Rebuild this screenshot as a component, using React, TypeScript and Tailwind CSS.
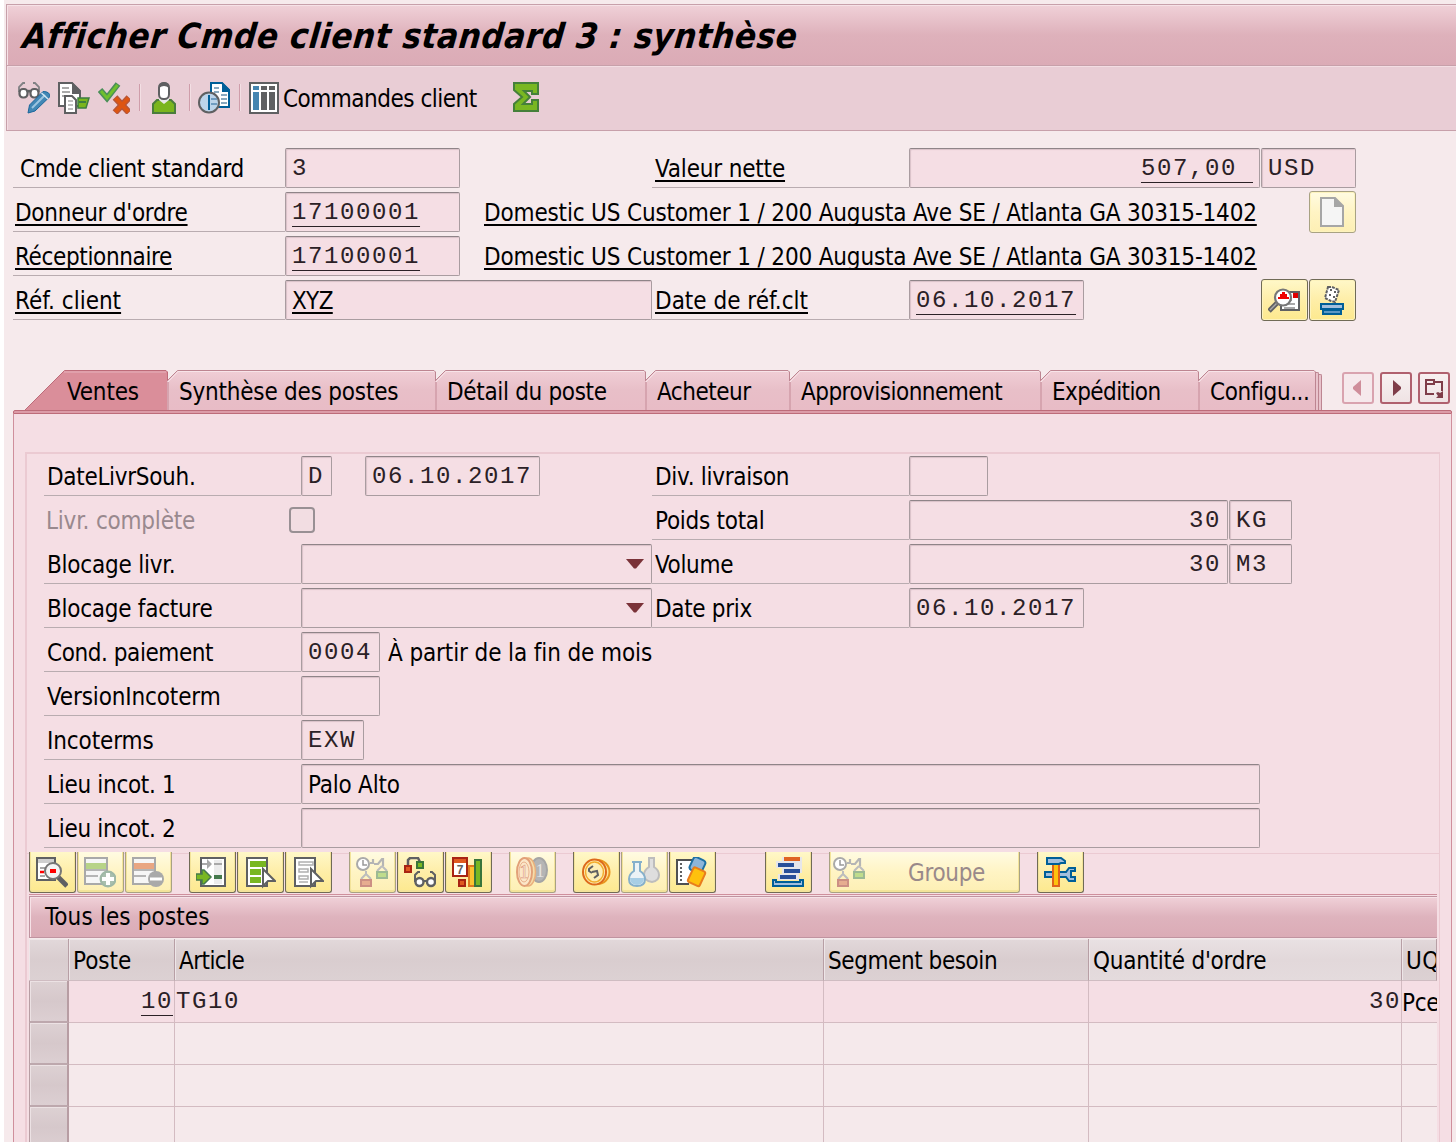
import React, { useLayoutEffect, useRef, useState } from "react";

const SANS = "font-['DejaVu_Sans_Condensed','DejaVu_Sans',sans-serif] [font-stretch:condensed]";
const MONO = "font-['Liberation_Mono',monospace]";

/* Text whose tracking is adjusted so that it fills a given width. */
function Fit({ w, children, className = "top-px" }: { w: number; children: string; className?: string }) {
  const ref = useRef<HTMLSpanElement>(null);
  const [ls, setLs] = useState(0);
  useLayoutEffect(() => {
    const el = ref.current;
    if (!el) return;
    el.style.letterSpacing = "0px";
    const natural = el.offsetWidth;
    setLs((w - natural) / children.length);
    el.style.letterSpacing = `${(w - natural) / children.length}px`;
  }, [w, children]);
  return (
    <span ref={ref} className={`relative inline-block shrink-0 whitespace-pre ${className}`} style={{ letterSpacing: `${ls}px` }}>
      {children}
    </span>
  );
}

const UL = "top-px underline decoration-2 underline-offset-[3px] [text-decoration-skip-ink:none]";
const MUL = "underline decoration-1 underline-offset-[6.500px] [text-decoration-skip-ink:none]";

function Mono({ children, link = false, className = "top-px" }: { children: string; link?: boolean; className?: string }) {
  return (
    <span className={`${MONO} relative whitespace-pre text-[24px] tracking-[1.6px] text-[#2b2126] ${link ? MUL : ""} ${className}`}>{children}</span>
  );
}

function Field({ className, children, right = false }: { className: string; children?: React.ReactNode; right?: boolean }) {
  return (
    <div
      className={`flex h-10 shrink-0 items-center rounded-[2px] border border-[#a99ca0] border-t-[#8f8488] bg-[#f5dee4] px-[6px] shadow-[inset_1px_1px_1px_#d9c0c7] ${right ? "justify-end" : ""} ${className}`}
    >
      {children}
    </div>
  );
}

function Label({ className, w, text, link = false }: { className: string; w: number; text: string; link?: boolean }) {
  return (
    <div className={`flex h-10 shrink-0 items-center border-b border-[#b9acb0] ${className}`}>
      <Fit w={w} className={link ? UL : "top-px"}>{text}</Fit>
    </div>
  );
}

function Svg({ children, w = 32, h = 32, className = "" }: { children: React.ReactNode; w?: number; h?: number; className?: string }) {
  return (
    <svg width={w} height={h} viewBox={`0 0 ${w} ${h}`} fill="none" className={`shrink-0 ${className}`}>
      {children}
    </svg>
  );
}

const G = "#5f6062";

const IconEdit = () => (
  <Svg>
    <path d="M1 10V5L5 1h2M21 10V5L17 1h-2" stroke="#808184" strokeWidth="1.800" />
    <path d="M9 10q2-2 4 0" stroke={G} strokeWidth="2.500" />
    <rect x="1.500" y="7" width="8" height="8.500" rx="3.500" fill="#fff" stroke={G} strokeWidth="2.200" />
    <rect x="12.500" y="7" width="8" height="8.500" rx="3.500" fill="#fff" stroke={G} strokeWidth="2.200" />
    <path d="M10 31l1.500-8L25 9.500q7 0 7 5L17 29z" fill="#4287b5" stroke="#1b679b" />
    <path d="M14 26L27 13" stroke="#9cc4e0" strokeWidth="2" />
    <path d="M23.500 11l6.500 6" stroke="#d5e6f2" strokeWidth="1.500" />
  </Svg>
);
const IconDocs = () => (
  <Svg>
    <path d="M1 1h13l8 8v15H1z" fill="#fff" stroke={G} strokeWidth="2" />
    <path d="M14 0l9 9v3h-9z" fill={G} />
    <path d="M4 6h7M4 10h8M4 14h4" stroke="#a9a9a9" strokeWidth="2" />
    <path d="M20 16h11l-3 10h-8z" fill="#7ab51d" stroke="#3d7d3f" strokeWidth="1.500" />
    <path d="M21 20h7" stroke="#3d7d3f" strokeWidth="2" />
    <path d="M7 14h7l4 4v13H7z" fill="#fff" stroke={G} strokeWidth="2" />
    <path d="M10 19h5M10 23h5M10 27h5" stroke="#a9a9a9" strokeWidth="1.500" />
  </Svg>
);
const IconCheckCross = () => (
  <Svg>
    <path d="M2 8l7 8L20 2" stroke="#4b8f58" strokeWidth="6" />
    <path d="M3 9l6 7L19.500 3" stroke="#6fc02c" strokeWidth="2.800" />
    <path d="M17 15.500l14 15M31 15.500L17 30.500" stroke="#b5563a" strokeWidth="6.500" />
    <path d="M17.500 16l13 14M30.500 16L17.500 30" stroke="#dd5512" strokeWidth="4" />
  </Svg>
);
const IconPerson = () => (
  <Svg w={26}>
    <path d="M2 31v-9l4-4h14l4 4v9z" fill="#7ab51d" stroke="#4a7d3c" strokeWidth="2" />
    <path d="M8 15h10v3l-5 4-5-4z" fill="#e8e8e8" />
    <rect x="8" y="1" width="10" height="16" rx="4.500" fill="#fff" stroke={G} strokeWidth="2" />
    <path d="M8 6q0-6 5-6t5 6q-5-4-10 0z" fill={G} />
  </Svg>
);
const IconDocTime = () => (
  <Svg>
    <path d="M13 1h11l7 7v17H13z" fill="#fff" stroke="#005f98" strokeWidth="2" />
    <path d="M24 0l8 8v2h-8z" fill="#005f98" />
    <path d="M16 6h5M16 10h5M23 13h6M23 17h6M23 21h6" stroke="#8aa9bf" strokeWidth="2" />
    <circle cx="11" cy="20.500" r="10" fill="#bcd4ea" stroke={G} strokeWidth="2" />
    <path d="M11 13v15" stroke="#005f98" strokeWidth="2" />
    <path d="M13 17h6M13 22h6" stroke="#6f9cc0" strokeWidth="2" />
  </Svg>
);
const IconColumns = () => (
  <Svg w={30}>
    <rect x="1" y="1" width="28" height="30" fill="#fff" stroke={G} strokeWidth="2" />
    <path d="M4 4h6v4H4zM4 10h6v18H4z" fill="#4585b0" />
    <path d="M12 4h6v4h-6zM12 10h6v18h-6zM20 4h6v4h-6zM20 10h6v18h-6z" fill={G} />
  </Svg>
);
const IconSigma = () => (
  <Svg w={26} h={30}>
    <path d="M1 1h24v11h-6V9h-8l6 6-7 7h9v-4h6v11H1v-7l8-7-8-7z" fill="#79b722" stroke="#45803a" strokeWidth="2" />
  </Svg>
);

const Glass = ({ cx, cy }: { cx: number; cy: number }) => (
  <circle cx={cx} cy={cy} r="4" fill="#fff" stroke={G} strokeWidth="2.400" />
);

const IconNewDoc = () => (
  <Svg>
    <path d="M5 1h14l8 8v20H5z" fill="#f5f5f5" stroke="#a6a6a6" strokeWidth="2" />
    <path d="M18 0l10 10H18z" fill="#a6a6a6" />
  </Svg>
);
const IconDocSearch = () => (
  <Svg>
    <path d="M13 7h18v18H13z" fill="#fff" stroke={G} strokeWidth="2" />
    <path d="M16 15h8M16 19h11M16 23h11" stroke="#a9a9a9" strokeWidth="2" />
    <path d="M25 8h5v5h-5z" fill="#e00000" />
    <path d="M10 17L1 26" stroke={G} strokeWidth="5" />
    <path d="M9 18l-7 7" stroke="#aaa" strokeWidth="1.500" />
    <circle cx="15" cy="12.500" r="8" fill="#fff" stroke="#777" strokeWidth="2.200" />
    <path d="M10 14v-2h2V9h2V7h3v2h2v3h2v2z" fill="#f00000" />
  </Svg>
);
const IconPrint = () => (
  <Svg>
    <path d="M12 2h4l7 3-4 12-4-1-6-3z" fill="#fff" stroke={G} strokeWidth="2" strokeDasharray="3 1" />
    <path d="M14 5h2m2 2h2m-7 3h2m2 2h2" stroke={G} strokeWidth="2" />
    <path d="M5 19h22v5H5z" fill="#a3bfdd" stroke="#005f98" strokeWidth="2" />
    <path d="M7 25h18v4H7z" fill="#5c97c4" stroke="#005f98" strokeWidth="2" />
  </Svg>
);
const IconDetail = () => (
  <Svg>
    <path d="M1 1h18v22H1z" fill="#fff" stroke={G} strokeWidth="2" />
    <path d="M2 2h16v4H2z" fill="#cfcfcf" />
    <path d="M4 11h6M4 19h5" stroke="#a9a9a9" strokeWidth="2" />
    <path d="M4 15h4" stroke="#f00" strokeWidth="2.500" />
    <path d="M22 20l9 9" stroke={G} strokeWidth="5" />
    <circle cx="17" cy="14" r="8" fill="#f4f4f4" stroke="#777" strokeWidth="2" />
    <path d="M14 12h6v4h-6z" fill="#f00" />
  </Svg>
);
const RowIcon = ({ band, children }: { band: string; children: React.ReactNode }) => (
  <Svg>
    <path d="M1 1h22v26H1z" fill="#f6f6f6" stroke="#a9a9a9" strokeWidth="2" />
    <path d="M2 6h20v6H2z" fill={band} />
    <path d="M2 19h12M2 13h20" stroke="#b5b5b5" strokeWidth="2" />
    {children}
  </Svg>
);
const IconAddRow = () => (
  <RowIcon band="#b7d388">
    <circle cx="24" cy="22" r="7.500" fill="#a9bfae" stroke="#9fb8a6" strokeWidth="2" />
    <path d="M24 16v12M18 22h12" stroke="#fff" strokeWidth="4" />
  </RowIcon>
);
const IconDelRow = () => (
  <RowIcon band="#e9a682">
    <circle cx="24" cy="22" r="8" fill="#a9a9a9" />
    <path d="M18 22h12" stroke="#fff" strokeWidth="3" />
  </RowIcon>
);
const IconInsert = () => (
  <Svg>
    <path d="M5 1h24v28H5z" fill="#fff" stroke={G} strokeWidth="2" />
    <path d="M18 3h8v24h-8z" fill="#ececec" />
    <path d="M6 6h5V2l5 5-5 5V8H6z" fill="#a9a9a9" />
    <path d="M18 7h8" stroke="#a9a9a9" strokeWidth="2" />
    <path d="M18 18h8v4h-8z" fill="#45794c" />
    <path d="M0 17h6v-4h2l7 7-7 7H6v-4H0z" fill="#79b722" stroke="#45794c" strokeWidth="1.500" />
  </Svg>
);
const Cursor = () => <path d="M19 12v17l5-5h7z" fill="#fff" stroke={G} strokeWidth="2" />;
const IconSelAll = () => (
  <Svg>
    <path d="M3 1h20v28H3z" fill="#fff" stroke={G} strokeWidth="2" />
    <path d="M6 4h16v6H6zM6 12h11v6H6zM6 20h11v6H6z" fill="#79b722" />
    <Cursor />
  </Svg>
);
const IconDeselAll = () => (
  <Svg>
    <path d="M3 1h20v28H3z" fill="#fff" stroke={G} strokeWidth="2" />
    <path d="M7 5h14v3H7zM7 12h9v3H7zM7 19h9v3H7zM7 25h9" stroke="#b0b0b0" strokeWidth="1.500" />
    <Cursor />
  </Svg>
);
const IconSchedule = () => (
  <Svg>
    <circle cx="7" cy="7" r="6" fill="#fff" stroke="#aaa" strokeWidth="2" />
    <path d="M7 3v5h4" stroke="#999" strokeWidth="1.500" />
    <path d="M14 6h3V2M18 7h4l4-5h1v7" stroke="#b5b5b5" strokeWidth="2.200" />
    <path d="M10 14v3l-5 5M10 17l5 5M26 9l-5 5M26 9l5 5" stroke="#bdbdbd" strokeWidth="2" />
    <path d="M5 23h10v6H5z" fill="#e6ad90" stroke="#cc9084" strokeWidth="2" />
    <path d="M21 15h10v6H21z" fill="#bfdc8c" stroke="#9db994" strokeWidth="2" />
  </Svg>
);
const IconStatus = () => (
  <Svg>
    <path d="M4 8V3l2-2h8l2 4" stroke={G} strokeWidth="2.500" />
    <path d="M1 9h6v6H1z" fill="#df5a20" stroke="#a82412" strokeWidth="2" />
    <path d="M13 5h6v6h-6z" fill="#79b722" stroke="#39753b" strokeWidth="2" />
    <path d="M11 25v-7l3-3h2M31 25v-7l-3-3h-2" stroke={G} strokeWidth="2" />
    <path d="M19 24h5" stroke={G} strokeWidth="2" />
    <Glass cx={15.5} cy={25} />
    <Glass cx={27} cy={25} />
  </Svg>
);
const IconAvail = () => (
  <Svg>
    <path d="M17 9h6v20h-6z" fill="#fbc42f" stroke="#e07a20" strokeWidth="2" />
    <path d="M23 3h6v26h-6z" fill="#79b722" stroke="#39753b" strokeWidth="2" />
    <path d="M1 1h14v18H1z" fill="#fff" stroke="#a82412" strokeWidth="2" />
    <path d="M2 2h12v4H2z" fill="#df5a20" />
    <text x="8" y="17" fontSize="12" fontWeight="bold" textAnchor="middle" fill={G} fontFamily="Liberation Sans">7</text>
    <path d="M7 23h6v6H7z" fill="#df5a20" stroke="#a82412" strokeWidth="2" />
  </Svg>
);
const IconCoins = () => (
  <Svg>
    <ellipse cx="23" cy="13" rx="8" ry="12" fill="#b5b5b5" stroke="#a5a5a5" strokeWidth="2" />
    <text x="24" y="20" fontSize="18" textAnchor="middle" fill="#e3e3e3" fontFamily="Liberation Serif">1</text>
    <ellipse cx="12" cy="15" rx="7.500" ry="14" fill="#f5ddaa" stroke="#eab07c" strokeWidth="1.500" />
    <ellipse cx="8.500" cy="15" rx="7.500" ry="14" fill="#fbe6c8" stroke="#e2a078" strokeWidth="2" />
    <ellipse cx="8" cy="15" rx="5" ry="10" stroke="#e9b38e" />
    <text x="8" y="21" fontSize="18" textAnchor="middle" fill="#fff" stroke="#df9f80" strokeWidth=".7" fontFamily="Liberation Serif">1</text>
  </Svg>
);
const IconPrice = () => (
  <Svg>
    <ellipse cx="17.500" cy="15" rx="12" ry="12" fill="#fde595" stroke="#e8951e" strokeWidth="2" />
    <ellipse cx="14.500" cy="15" rx="11.500" ry="12.500" fill="#fdeeb5" stroke="#dd6a1b" strokeWidth="2" />
    <ellipse cx="14.500" cy="15" rx="9" ry="10" stroke="#f3ad2e" strokeWidth="1.500" />
    <path d="M13 9l-4 3v2l3 2M12 15l5-1 1 4-4 3" stroke={G} strokeWidth="2" />
  </Svg>
);
const IconFlasks = () => (
  <Svg>
    <path d="M20 1h7M21 2v8q-5 3-5 8 0 6 8 7 7-1 7-7 0-5-5-8V2" fill="#dedede" stroke="#bdbdbd" strokeWidth="2" />
    <path d="M4 5h10M6 6v8q-5 3-5 8 0 7 8 7t8-7q0-5-5-8V6" fill="#edf3f6" stroke="#86b0cb" strokeWidth="2" />
    <path d="M2 21h14q0 7-7 7t-7-7z" fill="#a8cee5" />
  </Svg>
);
const IconNotebook = () => (
  <Svg>
    <path d="M18 3H1v24h12" fill="#fff" stroke="#4f5052" strokeWidth="2" />
    <path d="M5 6v20" stroke={G} strokeWidth="2" strokeDasharray="2 2" />
    <rect x="15" y="1" width="13" height="14" rx="3" transform="rotate(25 21 8)" fill="#8db5da" stroke="#1d70a4" strokeWidth="2" />
    <rect x="14" y="12" width="13" height="16" rx="2" transform="rotate(25 21 20)" fill="#fec10d" stroke="#e87d1d" strokeWidth="2" />
  </Svg>
);
const IconStack = () => (
  <Svg>
    <path d="M10 0h20v6h0v10h-3v7H6v-6h4v-6H4V4h6z" fill="#e6e6ea" />
    <path d="M12 0h16v4H12z" fill="#df6422" />
    <path d="M6 6h16v4H6zM12 12h16v4H12zM8 18h16v4H8z" fill="#284f99" />
    <path d="M1 23h3v2h24v-2h3v6H1z" fill="#a3bfdd" stroke="#005f98" strokeWidth="2" />
  </Svg>
);
const IconTools = () => (
  <Svg>
    <path d="M1 15h21l3-4h6v3h-4v6h4v4h-6l-3-4H1z" fill="#a3bfdd" stroke="#005f98" strokeWidth="2" />
    <path d="M9 7h6v22H9z" fill="#fdc30e" stroke="#e0631d" strokeWidth="2" />
    <path d="M3 1h14l4 3v2h-4l-2 1H3z" fill="#a3bfdd" stroke="#005f98" strokeWidth="2" />
  </Svg>
);

function TopBtn({ children, off = false }: { children: React.ReactNode; off?: boolean }) {
  return (
    <div
      className={`-mt-px flex h-[42px] w-[47px] shrink-0 items-start rounded-[3px] border pt-[5px] pl-[6px] ${off ? "border-[#a8a283] bg-linear-to-b from-[#fffbe2] via-[#fff4c4] to-[#fdefb4]" : "border-[#706b56] bg-linear-to-b from-[#fff8c8] via-[#feeea8] to-[#fde98e]"} shadow-[inset_0_0_0_1px_#fdf3bd]`}
    >
      {children}
    </div>
  );
}

function ToolBtn({ children, off = false, className = "w-[47px] pl-[6px]" }: { children: React.ReactNode; off?: boolean; className?: string }) {
  return (
    <div
      className={`relative flex h-[41px] shrink-0 items-start rounded-b-[3px] border border-t-0 pt-[5px] ${off ? "border-[#a8a283] bg-linear-to-b from-[#fffbe2] via-[#fff4c4] to-[#fdefb4]" : "border-[#706b56] bg-linear-to-b from-[#fff8c8] via-[#feeea8] to-[#fde98e]"} shadow-[inset_0_-1px_0_1px_#f3e39a] ${className}`}
    >
      {children}
    </div>
  );
}

function Tab({ text, tw, w, className }: { text: string; tw: number; w: number; className: string }) {
  return (
    <div className={`relative flex h-10 shrink-0 items-center pl-[12px] ${className}`}>
      <svg width={w} height="40" className="absolute top-0 left-0" fill="none">
        <defs>
          <linearGradient id="tabFill" x1="0" y1="0" x2="0" y2="1">
            <stop offset="0" stopColor="#f0ced6" />
            <stop offset=".5" stopColor="#e8bfc8" />
            <stop offset="1" stopColor="#e8bcc6" />
          </linearGradient>
        </defs>
        <path d={`M0 40V11L10.500 .5H${w - 2}l1.500 1.500V40z`} fill="url(#tabFill)" />
        <path d={`M0 11L10.500 .5H${w - 2}l1.500 1.500V40`} stroke="#bd8591" />
        <path d={`M1 12L11 1.500H${w - 2}`} stroke="#f8e4e9" />
        <path d="M1 12V40" stroke="#d6a4af" strokeWidth="2" />
      </svg>
      <Fit w={tw} className="top-[2px]">{text}</Fit>
    </div>
  );
}

function NavBtn({ children, off = false }: { children: React.ReactNode; off?: boolean }) {
  return (
    <div className={`flex size-8 items-center justify-center rounded-[3px] border-2 ${off ? "border-[#d9a3af] bg-[#f6e9ec]" : "border-[#b0606e] bg-linear-to-b from-[#f8f0f1] to-[#efe3e4]"}`}>
      {children}
    </div>
  );
}

const Arrow = () => (
  <svg width="18" height="10" className="mr-[1px] shrink-0" fill="none">
    <path d="M0 0h18L10 9.500H8z" fill="#7a3238" />
  </svg>
);

const Sep = ({ className }: { className: string }) => (
  <div className={`h-[27px] w-[2px] border-l border-[#cf9daa] bg-[#f3dfe4] ${className}`} />
);

const COLS = "grid grid-cols-[40px_106px_649px_265px_313px_35px]";

function Header({ text, w, light = false }: { text: string; w: number; light?: boolean }) {
  return (
    <div
      className={`flex items-center overflow-hidden border-r border-b border-r-[#b79fa5] border-b-[#cfbcc1] pl-[4px] shadow-[inset_1px_1px_0_#eee6e8] ${light ? "bg-linear-to-b from-[#e9e1e3] via-[#e2d8da] to-[#e4dbdd]" : "bg-linear-to-b from-[#e2d8da] via-[#d9cdcf] to-[#dcd1d3]"}`}
    >
      {text && <Fit w={w}>{text}</Fit>}
    </div>
  );
}

function Row({ first = false }: { first?: boolean }) {
  const cell = `flex items-center overflow-hidden border-r border-b border-[#d3bbc1] ${first ? "bg-[#f5dee4]" : "bg-[#f5e9eb]"}`;
  return (
    <div className={`${COLS} h-[42px]`}>
      <div className="border-r-2 border-b-2 border-l border-[#b79da3] border-b-[#bda8ad] bg-linear-to-b from-[#ddd1d3] via-[#d6c8cb] to-[#dccfd2] shadow-[inset_1px_1px_0_#ece2e4]" />
      <div className={`${cell} justify-end pr-px`}>{first && <Mono link className="top-0">10</Mono>}</div>
      <div className={`${cell} pl-px`}>{first && <Mono className="top-0">TG10</Mono>}</div>
      <div className={cell} />
      <div className={`${cell} justify-end`}>{first && <Mono className="top-0">30</Mono>}</div>
      <div className={`${cell} border-r-0`}>{first && <Fit w={37}>Pce</Fit>}</div>
    </div>
  );
}

export default function App() {
  return (
    <div className={`${SANS} h-[1142px] w-[1456px] overflow-hidden border-l-4 border-white bg-[#f6eaec] text-[24px] leading-[28px] text-black`}>
      <header className="ml-[2px] pt-[4px]">
        <div className="flex h-[62px] items-center border-t border-b border-l border-[#c7a0aa] bg-linear-to-b from-[#f0d1d8] via-[#deb1bb] to-[#dbabb6] pl-[15px] shadow-[inset_1px_1px_0_#f6e2e7]">
          <Fit w={773} className="top-px left-px -skew-x-6 text-[34.7px] leading-[42px] font-bold italic">Afficher Cmde client standard 3 : synthèse</Fit>
        </div>
        <div className="flex h-[65px] items-start border-b border-l border-[#c7a0aa] bg-[#e9cdd5] pt-[16px] pl-[11px] shadow-[inset_1px_1px_0_#f3dde3]">
          <div className="flex gap-2">
            <IconEdit />
            <IconDocs />
            <IconCheckCross />
          </div>
          <Sep className="mt-[2px] ml-[9px]" />
          <div className="ml-[10px]"><IconPerson /></div>
          <Sep className="mt-[2px] ml-[12px]" />
          <div className="ml-[7px]"><IconDocTime /></div>
          <Sep className="mt-[2px] ml-[9px]" />
          <div className="ml-[8px]"><IconColumns /></div>
          <Fit w={194} className="top-px mt-[2px] ml-[4px]">Commandes client</Fit>
          <div className="ml-[36px]"><IconSigma /></div>
        </div>
      </header>

      <section className="mt-[17px] ml-[9px]">
        <div className="flex h-11">
          <Label className="w-[272px] pl-[7px]" w={224} text="Cmde client standard" />
          <Field className="w-[175px]"><Mono>3</Mono></Field>
          <Label className="ml-[192px] w-[257px] pl-[3px]" w={130} text="Valeur nette" link />
          <Field className="w-[351px]" right><Mono link>{"507,00 "}</Mono></Field>
          <Field className="ml-px w-[95px]"><Mono>USD</Mono></Field>
        </div>
        <div className="flex h-11">
          <Label className="w-[272px] pl-[2px]" w={173} text="Donneur d'ordre" link />
          <Field className="w-[175px]"><Mono link>17100001</Mono></Field>
          <div className="ml-[24px] flex h-10 w-[825px] items-center">
            <Fit w={773} className={UL}>Domestic US Customer 1 / 200 Augusta Ave SE / Atlanta GA 30315-1402</Fit>
          </div>
          <TopBtn off><IconNewDoc /></TopBtn>
        </div>
        <div className="flex h-11">
          <Label className="w-[272px] pl-[2px]" w={157} text="Réceptionnaire" link />
          <Field className="w-[175px]"><Mono link>17100001</Mono></Field>
          <div className="ml-[24px] flex h-10 items-center">
            <Fit w={773} className={UL}>Domestic US Customer 1 / 200 Augusta Ave SE / Atlanta GA 30315-1402</Fit>
          </div>
        </div>
        <div className="flex h-11">
          <Label className="w-[272px] pl-[2px]" w={106} text="Réf. client" link />
          <Field className="w-[367px]"><Fit w={41} className={UL}>XYZ</Fit></Field>
          <Label className="w-[257px] pl-[3px]" w={153} text="Date de réf.clt" link />
          <Field className="w-[175px]"><Mono link>06.10.2017</Mono></Field>
          <div className="ml-[177px] flex gap-px">
            <TopBtn><IconDocSearch /></TopBtn>
            <TopBtn><IconPrint /></TopBtn>
          </div>
        </div>
      </section>

      <nav className="mt-[46px] ml-[21px] flex h-10 items-start">
        <div className="relative flex h-10 w-[142px] shrink-0 items-center pl-[42px]">
          <svg width="143" height="40" className="absolute top-0 left-0" fill="none">
            <path d="M0 40L39.500 .5H141l1.500 1.500V40z" fill="#da8e9a" />
            <path d="M0 40L39.500 .5H141l1.500 1.500V40" stroke="#bd6b79" />
            <path d="M39 2H141" stroke="#e0a0ab" strokeWidth="2" />
          </svg>
          <Fit w={72} className="top-[2px]">Ventes</Fit>
        </div>
        <Tab className="w-[268px]" w={269} text="Synthèse des postes" tw={219} />
        <Tab className="w-[210px]" w={211} text="Détail du poste" tw={160} />
        <Tab className="w-[144px]" w={145} text="Acheteur" tw={94} />
        <Tab className="w-[251px]" w={252} text="Approvisionnement" tw={201} />
        <Tab className="w-[158px]" w={159} text="Expédition" tw={108} />
        <Tab className="w-[118px]" w={118} text="Configu..." tw={100} />
        <div className="mt-[2px] h-[38px] w-[3px] rounded-tr-[2px] border-t border-r border-[#bd8591] bg-[#e9c3cc]" />
        <div className="mt-[4px] h-[36px] w-[3px] rounded-tr-[2px] border-t border-r border-[#bd8591] bg-[#e9c3cc]" />
        <div className="mt-[2px] ml-[20px] flex gap-[6px]">
          <NavBtn off>
            <svg width="10" height="16"><path d="M8 0v16L0 9V7z" fill="#cf8e9b" /></svg>
          </NavBtn>
          <NavBtn>
            <svg width="10" height="16"><path d="M2 0v16l8-7V7z" fill="#7f3d49" /></svg>
          </NavBtn>
          <NavBtn>
            <svg width="20" height="20" fill="none">
              <path d="M10 16H2V2h8v2h8v9" stroke="#7f3d49" strokeWidth="2" />
              <path d="M2 6h8V3" stroke="#7f3d49" strokeWidth="2" />
              <path d="M12 15l2-1 2 1 3-2v7h-7l2-2z" fill="#7f3d49" />
            </svg>
          </NavBtn>
        </div>
      </nav>

      <main className="ml-[9px] w-[1439px]">
        <div className="h-[4px] rounded-t-[2px] border border-[#bd6b79] bg-[#dc9ba7]" />
        <div className="h-[728px] border-x border-[#cf8f9c] bg-[#f5dee4] pt-[38px] pr-[11px] pl-[11px]">
          <div className="h-[690px] border-t-2 border-r border-l-2 border-[#ebcad2] pt-[2px]">
            <div className="pl-[17px]">
              <div className="flex h-11">
                <Label className="w-[257px] pl-[3px]" w={148} text="DateLivrSouh." />
                <Field className="w-[31px]"><Mono>D</Mono></Field>
                <Field className="ml-[33px] w-[175px]"><Mono>06.10.2017</Mono></Field>
                <Label className="ml-[112px] w-[257px] pl-[3px]" w={134} text="Div. livraison" />
                <Field className="w-[79px]" />
              </div>
              <div className="flex h-11">
                <div className="flex h-10 w-[245px] items-center pl-[2px] text-[#99898e]"><Fit w={149}>Livr. complète</Fit></div>
                <div className="mt-[7px] size-[26px] rounded-[4px] border-2 border-[#999094] bg-[#f2dde2]" />
                <Label className="ml-[337px] w-[257px] pl-[3px]" w={110} text="Poids total" />
                <Field className="w-[319px]" right><Mono>30</Mono></Field>
                <Field className="ml-px w-[63px]"><Mono>KG</Mono></Field>
              </div>
              <div className="flex h-11">
                <Label className="w-[257px] pl-[3px]" w={128} text="Blocage livr." />
                <Field className="w-[351px]" right><Arrow /></Field>
                <Label className="w-[257px] pl-[3px]" w={78} text="Volume" />
                <Field className="w-[319px]" right><Mono>30</Mono></Field>
                <Field className="ml-px w-[63px]"><Mono>M3</Mono></Field>
              </div>
              <div className="flex h-11">
                <Label className="w-[257px] pl-[3px]" w={165} text="Blocage facture" />
                <Field className="w-[351px]" right><Arrow /></Field>
                <Label className="w-[257px] pl-[3px]" w={97} text="Date prix" />
                <Field className="w-[175px]"><Mono>06.10.2017</Mono></Field>
              </div>
              <div className="flex h-11">
                <Label className="w-[257px] pl-[3px]" w={166} text="Cond. paiement" />
                <Field className="w-[79px]"><Mono>0004</Mono></Field>
                <div className="ml-[8px] flex h-10 items-center"><Fit w={264}>À partir de la fin de mois</Fit></div>
              </div>
              <div className="flex h-11">
                <Label className="w-[257px] pl-[3px]" w={174} text="VersionIncoterm" />
                <Field className="w-[79px]" />
              </div>
              <div className="flex h-11">
                <Label className="w-[257px] pl-[3px]" w={107} text="Incoterms" />
                <Field className="w-[63px]"><Mono>EXW</Mono></Field>
              </div>
              <div className="flex h-11">
                <Label className="w-[257px] pl-[3px]" w={129} text="Lieu incot. 1" />
                <Field className="w-[959px]"><Fit w={92}>Palo Alto</Fit></Field>
              </div>
              <div className="flex h-11">
                <Label className="w-[257px] pl-[3px]" w={129} text="Lieu incot. 2" />
                <Field className="w-[959px]" />
              </div>
            </div>

            <div className="relative flex h-[42px] pl-[2px]">
              <div className="absolute top-px right-0 left-0 h-px bg-[#ebcad2]" />
              <div className="flex gap-px">
                <ToolBtn><IconDetail /></ToolBtn>
                <ToolBtn off><IconAddRow /></ToolBtn>
                <ToolBtn off><IconDelRow /></ToolBtn>
              </div>
              <div className="ml-[17px] flex gap-px">
                <ToolBtn><IconInsert /></ToolBtn>
                <ToolBtn><IconSelAll /></ToolBtn>
                <ToolBtn><IconDeselAll /></ToolBtn>
              </div>
              <div className="ml-[17px] flex gap-px">
                <ToolBtn off><IconSchedule /></ToolBtn>
                <ToolBtn><IconStatus /></ToolBtn>
                <ToolBtn><IconAvail /></ToolBtn>
              </div>
              <div className="ml-[17px] flex"><ToolBtn off><IconCoins /></ToolBtn></div>
              <div className="ml-[17px] flex gap-px">
                <ToolBtn><IconPrice /></ToolBtn>
                <ToolBtn off><IconFlasks /></ToolBtn>
                <ToolBtn><IconNotebook /></ToolBtn>
              </div>
              <div className="ml-[49px] flex"><ToolBtn><IconStack /></ToolBtn></div>
              <div className="ml-[17px] flex">
                <ToolBtn off className="w-[191px] pl-[3px]">
                  <IconSchedule />
                  <Fit w={77} className="top-px mt-[1px] ml-[43px] text-[#99898a]">Groupe</Fit>
                </ToolBtn>
              </div>
              <div className="ml-[17px] flex"><ToolBtn><IconTools /></ToolBtn></div>
            </div>

            <div className="ml-[2px] w-[1408px] overflow-hidden border-t border-[#cf8f9c] pt-px">
              <div className="flex h-[42px] items-center border-t border-b border-l border-[#c093a0] bg-linear-to-b from-[#f0d1d8] via-[#deb3bd] to-[#dbabb6] pl-[15px] shadow-[inset_1px_1px_0_#f6e2e7]">
                <Fit w={165} className="top-0">Tous les postes</Fit>
              </div>
              <div className={`${COLS} h-[43px] border-t border-[#f5e9eb]`}>
                <Header text="" w={0} />
                <Header text="Poste" w={58} />
                <Header text="Article" w={65} />
                <Header text="Segment besoin" w={169} />
                <Header text="Quantité d'ordre" w={173} light />
                <Header text="UQ" w={34} />
              </div>
              <Row first />
              <Row />
              <Row />
              <Row />
            </div>
          </div>
        </div>
      </main>
    </div>
  );
}
